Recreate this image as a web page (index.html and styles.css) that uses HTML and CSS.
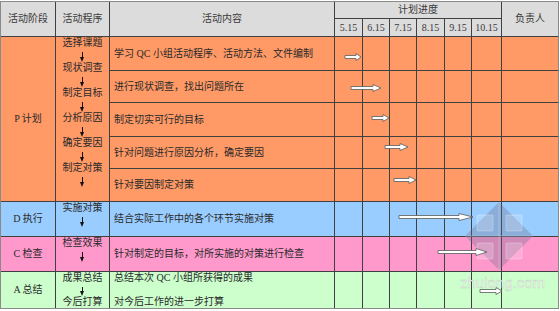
FILE: index.html
```html
<!DOCTYPE html>
<html lang="zh">
<head>
<meta charset="utf-8">
<link rel="stylesheet" href="styles.css">
</head>
<body>
<div class="sheet">
  <div class="grid">
    <div class="c h r2 center">活动阶段</div>
    <div class="c h r2 center">活动程序</div>
    <div class="c h r2 center">活动内容</div>
    <div class="c h s6 center">计划进度</div>
    <div class="c h r2 center">负责人</div>
    <div class="c h center">5.15</div>
    <div class="c h center">6.15</div>
    <div class="c h center">7.15</div>
    <div class="c h center">8.15</div>
    <div class="c h center">9.15</div>
    <div class="c h center">10.15</div>

    <div class="c o r5 center">P 计划</div>
    <div class="c o r5 steps">
      <span class="st">选择课题</span><span class="ar"></span>
      <span class="st">现状调查</span><span class="ar"></span>
      <span class="st">制定目标</span><span class="ar"></span>
      <span class="st">分析原因</span><span class="ar"></span>
      <span class="st">确定要因</span><span class="ar"></span>
      <span class="st">制定对策</span><span class="ar"></span>
    </div>
    <div class="c o txt">学习 QC 小组活动程序、活动方法、文件编制</div>
    <div class="c o"></div><div class="c o"></div><div class="c o"></div><div class="c o"></div><div class="c o"></div><div class="c o"></div><div class="c o"></div>
    <div class="c o txt">进行现状调查，找出问题所在</div>
    <div class="c o"></div><div class="c o"></div><div class="c o"></div><div class="c o"></div><div class="c o"></div><div class="c o"></div><div class="c o"></div>
    <div class="c o txt">制定切实可行的目标</div>
    <div class="c o"></div><div class="c o"></div><div class="c o"></div><div class="c o"></div><div class="c o"></div><div class="c o"></div><div class="c o"></div>
    <div class="c o txt">针对问题进行原因分析，确定要因</div>
    <div class="c o"></div><div class="c o"></div><div class="c o"></div><div class="c o"></div><div class="c o"></div><div class="c o"></div><div class="c o"></div>
    <div class="c o txt">针对要因制定对策</div>
    <div class="c o"></div><div class="c o"></div><div class="c o"></div><div class="c o"></div><div class="c o"></div><div class="c o"></div><div class="c o"></div>

    <div class="c b center">D 执行</div>
    <div class="c b steps"><span class="st">实施对策</span><span class="ar"></span></div>
    <div class="c b txt">结合实际工作中的各个环节实施对策</div>
    <div class="c b"></div><div class="c b"></div><div class="c b"></div><div class="c b"></div><div class="c b"></div><div class="c b"></div><div class="c b"></div>

    <div class="c p center">C 检查</div>
    <div class="c p steps"><span class="st">检查效果</span><span class="ar"></span></div>
    <div class="c p txt">针对制定的目标，对所实施的对策进行检查</div>
    <div class="c p"></div><div class="c p"></div><div class="c p"></div><div class="c p"></div><div class="c p"></div><div class="c p"></div><div class="c p"></div>

    <div class="c g center">A 总结</div>
    <div class="c g steps split"><span class="st">成果总结</span><span class="ar short"></span><span class="st">今后打算</span></div>
    <div class="c g txt split"><span>总结本次 QC 小组所获得的成果</span><span>对今后工作的进一步打算</span></div>
    <div class="c g"></div><div class="c g"></div><div class="c g"></div><div class="c g"></div><div class="c g"></div><div class="c g"></div><div class="c g"></div>
  </div>

  <svg class="overlay" width="560" height="310" viewBox="0 1 560 310" xmlns="http://www.w3.org/2000/svg">
    <g class="mark">
      <polygon points="499,202 533,236 499,270 465,236" fill="rgba(110,110,140,0.32)"/>
      <rect x="477" y="215" width="16" height="16" rx="1" fill="rgba(255,255,255,0.2)" stroke="rgba(255,255,255,0.35)" stroke-width="0.8"/>
      <rect x="506" y="215" width="16" height="16" rx="1" fill="rgba(255,255,255,0.2)" stroke="rgba(255,255,255,0.35)" stroke-width="0.8"/>
      <rect x="477" y="243" width="16" height="16" rx="1" fill="rgba(255,255,255,0.2)" stroke="rgba(255,255,255,0.35)" stroke-width="0.8"/>
      <rect x="506" y="243" width="16" height="16" rx="1" fill="rgba(255,255,255,0.2)" stroke="rgba(255,255,255,0.35)" stroke-width="0.8"/>
      <path d="M499 202 L499 270 M465 236 L533 236" stroke="rgba(255,255,255,0.25)" stroke-width="1"/>
      <text x="460" y="288" class="wm">zhulong.com</text>
    </g>
    <g class="bar">
      <polygon points="345,55.5 356,55.5 356,53.5 361,57 356,60.5 356,58.5 345,58.5"/>
      <polygon points="351,86.5 373,86.5 373,84.5 381,88 373,91.5 373,89.5 351,89.5"/>
      <polygon points="372,116.5 383,116.5 383,114.5 389,118 383,121.5 383,119.5 372,119.5"/>
      <polygon points="385,145.5 400,145.5 400,143.5 408,147 400,150.5 400,148.5 385,148.5"/>
      <polygon points="394,178.5 409,178.5 409,176.5 416,180 409,183.5 409,181.5 394,181.5"/>
      <polygon points="399,215.5 459,215.5 459,213.5 473,217 459,220.5 459,218.5 399,218.5"/>
      <polygon points="438,250.5 476,250.5 476,248.5 487,252 476,255.5 476,253.5 438,253.5"/>
      <polygon points="480,289.5 496,289.5 496,287.5 502,291 496,294.5 496,292.5 480,292.5"/>
    </g>
  </svg>
</div>
</body>
</html>
```

FILE: styles.css
```css
* { box-sizing: border-box; }

html, body {
  margin: 0;
  padding: 0;
  background: #ffffff;
}

body {
  font-family: "Liberation Serif", "Noto Sans CJK SC", serif;
  font-size: 10px;
  font-weight: 400;
  color: #2a2a2a;
}

.sheet {
  position: relative;
  width: 560px;
  margin-top: 1px;
}

.grid {
  display: grid;
  width: 559px;
  grid-template-columns: 54px 53px 224px 27px 26px 26px 27px 26px 29px 56px;
  grid-template-rows: 16px 17px 33px 31px 33px 31px 32px 34px 34px 36px;
  gap: 1px;
  background: #404040;
  border: 1px solid #8a8a8a;
}

.c {
  overflow: hidden;
  white-space: nowrap;
  line-height: 12px;
}

.r2 { grid-row: span 2; }
.r5 { grid-row: span 5; }
.s6 { grid-column: span 6; }

.h { background: #dcdcdc; color: #3a3a3a; }
.o { background: #ff9966; }
.b { background: #99ccff; }
.p { background: #ff99cc; }
.g { background: #ccffcc; }

.center {
  display: flex;
  align-items: center;
  justify-content: center;
}

.txt {
  display: flex;
  align-items: center;
  padding-left: 4px;
}

.txt.split {
  flex-direction: column;
  align-items: flex-start;
  justify-content: space-between;
}

.steps {
  display: flex;
  flex-direction: column;
  align-items: center;
}

.steps.split {
  justify-content: space-between;
}

.st {
  display: block;
  height: 12px;
  line-height: 12px;
}

.ar {
  position: relative;
  display: block;
  width: 7px;
  height: 13px;
}

.ar.short { height: 12px; }

.ar::before {
  content: "";
  position: absolute;
  left: 3px;
  top: 3px;
  width: 1px;
  bottom: 3px;
  background: #111111;
}

.ar::after {
  content: "";
  position: absolute;
  left: 1px;
  bottom: 0;
  border-left: 2.5px solid transparent;
  border-right: 2.5px solid transparent;
  border-top: 5px solid #111111;
}

.overlay {
  position: absolute;
  left: 0;
  top: 0;
  pointer-events: none;
}

.bar polygon {
  fill: #ffffff;
  stroke: #5a5a5a;
  stroke-width: 0.8;
}

.wm {
  font-family: "Liberation Sans", sans-serif;
  font-size: 15px;
  fill: #f2f8f2;
  stroke: rgba(150, 165, 150, 0.55);
  stroke-width: 0.4;
}
```
